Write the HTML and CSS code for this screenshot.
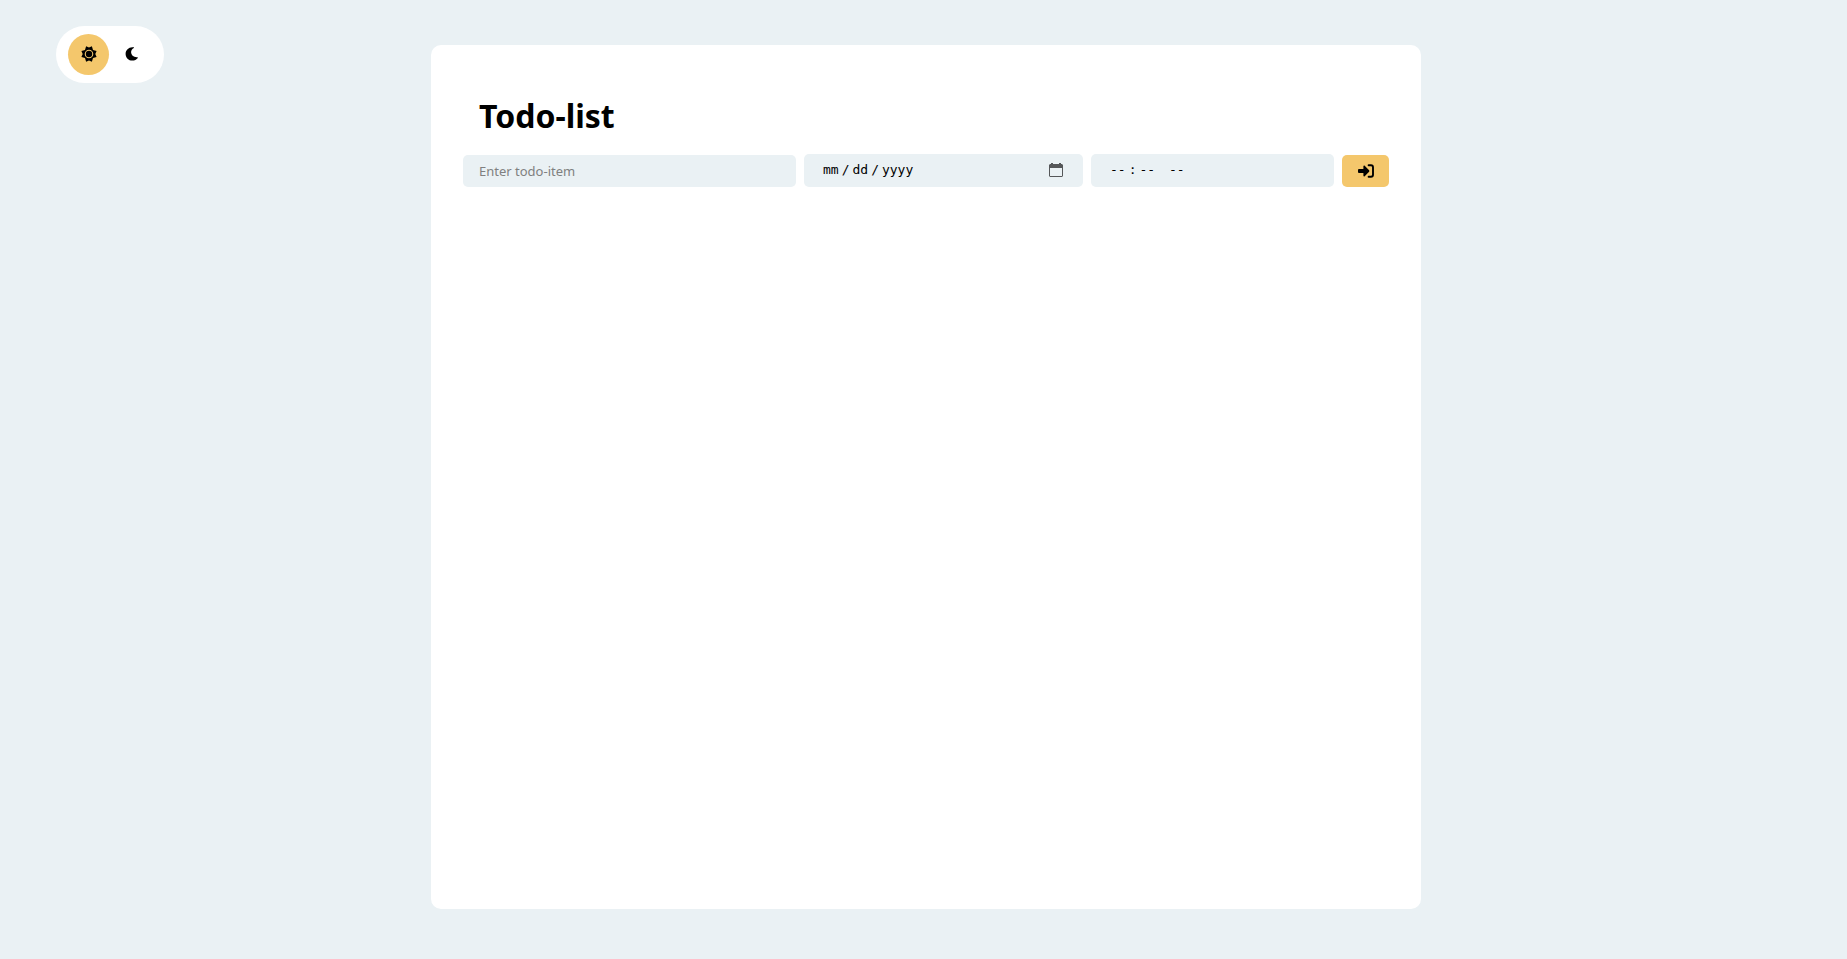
FILE: index.html
```html
<!DOCTYPE html>
<html lang="en">
<head>
<meta charset="utf-8">
<meta name="viewport" content="width=device-width, initial-scale=1">
<title>Todo-list</title>
<link rel="stylesheet" href="styles.css">
</head>
<body>
<div class="page">
  <aside class="side">
    <div class="theme-switch">
      <button class="theme-button active" type="button" aria-label="Light theme">
        <svg class="icon" viewBox="0 0 16 16" aria-hidden="true">
          <path fill-rule="evenodd" d="M5.1 .3 8 1.5 10.9 .3 12 3.9 15.6 5.1 14.3 8 15.6 10.9 12 12.1 10.9 15.7 8 14.5 5.1 15.7 4 12.1 .4 10.9 1.7 8 .4 5.1 4 3.9ZM8 3.7a4.3 4.3 0 1 0 0 8.6 4.3 4.3 0 0 0 0-8.6Z"/>
          <circle cx="8" cy="8" r="3.2"/>
        </svg>
      </button>
      <button class="theme-button" type="button" aria-label="Dark theme">
        <svg class="icon" viewBox="0 0 16 16" aria-hidden="true">
          <path d="M8.300 1.200C4.600 1.200 1.600 4.200 1.600 7.900s3 6.700 6.700 6.700c2.200 0 4.300-1.100 5.500-2.700.2-.3 0-.7-.4-.7C9.800 11.500 7.100 9.200 7.100 6.100c0-1.800 1-3.300 2.700-4.200.3-.2.300-.6-.1-.6-.4-.1-.9-.1-1.400-.1Z"/>
        </svg>
      </button>
    </div>
  </aside>
  <main class="card">
    <h1 class="title">Todo-list</h1>
    <form class="todo-form">
      <input class="field field-text" type="text" placeholder="Enter todo-item" aria-label="Todo item">
      <input class="field field-picker" type="date" aria-label="Due date">
      <input class="field field-picker field-time" type="time" aria-label="Due time">
      <button class="submit" type="submit" aria-label="Add todo">
        <svg class="icon" viewBox="0 0 16 16" aria-hidden="true">
          <path d="M.9 6h4.500V3.300c0-.8.800-1.100 1.300-.6l4.400 4.600c.4.400.4 1 0 1.400l-4.400 4.600c-.5.500-1.300.2-1.300-.6V10H.9C.4 10 0 9.600 0 9.100V6.900C0 6.400.4 6 .9 6Z"/>
          <path d="M10.600 2.300h2.400a2 2 0 0 1 2 2v7.400a2 2 0 0 1-2 2h-2.400" fill="none" stroke="currentColor" stroke-width="1.900" stroke-linecap="round"/>
        </svg>
      </button>
    </form>
  </main>
</div>
</body>
</html>
```
FILE: styles.css
```css
* {
  box-sizing: border-box;
}

body {
  margin: 0;
  background: #eaf1f4;
  color: #000;
  font-family: "Noto Sans", sans-serif;
}

.page {
  display: grid;
  grid-template-columns: 431fr 990fr 426fr;
  min-height: 100vh;
}

.side {
  padding: 26px 0 0 56px;
}

.theme-switch {
  display: inline-flex;
  gap: 2px;
  padding: 8px 12px;
  border-radius: 29px;
  background: #fff;
}

.theme-button {
  display: grid;
  place-items: center;
  width: 41px;
  height: 41px;
  padding: 0 0 1px;
  border: 0;
  border-radius: 50%;
  background: transparent;
  color: #000;
  cursor: pointer;
}

.theme-button.active {
  background: #f4c76c;
}

.icon {
  display: block;
  width: 16px;
  height: 16px;
  fill: currentColor;
}

.card {
  margin: 45px 0 50px;
  padding: 48px 32px;
  border-radius: 10px;
  background: #fff;
}

.title {
  margin: 0 16px 16px;
  font-size: 32px;
  line-height: 45px;
}

.todo-form {
  display: flex;
  align-items: flex-end;
  gap: 8px;
}

.field {
  min-width: 0;
  height: 33px;
  padding: 0 16px;
  border: 0;
  border-radius: 5px;
  background: #eaf1f4;
  font-size: 13px;
}

.field-text {
  flex: 1 1 333px;
  height: 32px;
  font-family: "Noto Sans", sans-serif;
}

.field-text::placeholder {
  color: #808080;
}

.field-picker {
  flex: 1 1 279px;
  padding: 0 20px 2px 18px;
  font-family: "DejaVu Sans Mono", monospace;
}

.field-picker::-webkit-datetime-edit-text {
  padding: 0 2px;
}

.field-picker::-webkit-calendar-picker-indicator {
  width: 14px;
  height: 14px;
  padding: 0;
  background: url("data:image/svg+xml,%3Csvg xmlns='http://www.w3.org/2000/svg' viewBox='0 0 14 14'%3E%3Cpath fill='%23555759' fill-rule='evenodd' d='M2 0h2v1h6V0h2v1h1l1 1v11l-1 1H1l-1-1V2l1-1h1ZM1 5v8h12V5Z'/%3E%3C/svg%3E") center / 14px 14px no-repeat;
}

.field-time {
  flex-basis: 243px;
}

.field-time::-webkit-calendar-picker-indicator {
  display: none;
}

.submit {
  display: grid;
  flex: none;
  place-items: center;
  width: 47px;
  height: 32px;
  padding: 0 0 1px;
  border: 0;
  border-radius: 5px;
  background: #f4c76c;
  color: #000;
  cursor: pointer;
}
```
